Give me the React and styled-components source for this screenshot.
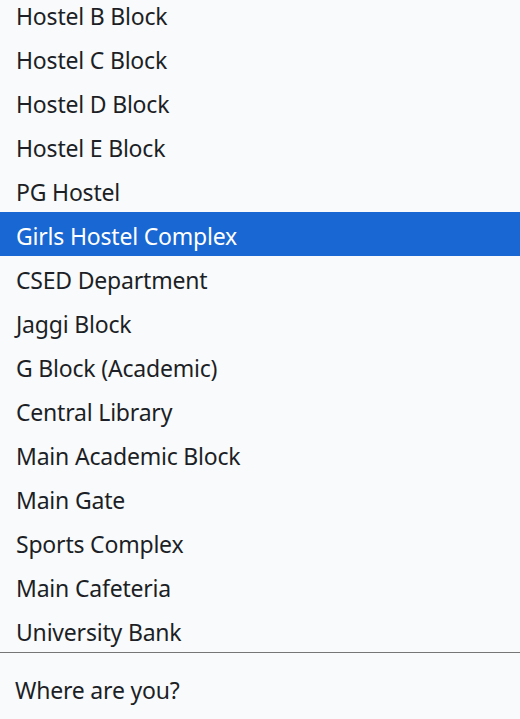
import React from "react";
import styled, { createGlobalStyle } from "styled-components";

const Global = createGlobalStyle`
  html, body { margin: 0; padding: 0; background: #f9fafb; }
  body { font-family: "Noto Sans", "Open Sans", sans-serif; }
`;

const Page = styled.div`
  width: 520px;
  height: 719px;
  display: flex;
  flex-direction: column;
  background: #f9fafb;
  overflow: hidden;
`;

const ListBox = styled.ul`
  list-style: none;
  margin: 0;
  padding: 0;
  height: 652px;
  overflow: hidden;
  flex: none;
`;

const Scroller = styled.div`
  margin-top: -8px;
`;

const Option = styled.li`
  height: 44px;
  box-sizing: border-box;
  display: flex;
  align-items: center;
  padding: 3px 16px 0;
  font-size: 23px;
  letter-spacing: -0.2px;
  color: ${(p) => (p.$selected ? "#ffffff" : "#1c1f26")};
  background: ${(p) => (p.$selected ? "#1967d2" : "transparent")};
  white-space: nowrap;
`;

const InputBar = styled.div`
  flex: 1;
  border-top: 1px solid #767676;
  display: flex;
  align-items: center;
  padding: 0 15px;
`;

const Input = styled.input`
  border: none;
  outline: none;
  background: transparent;
  font-family: "Noto Sans", "Open Sans", sans-serif;
  font-size: 23px;
  letter-spacing: -0.2px;
  color: #1c1f26;
  width: 100%;
  padding: 0;
  margin-top: 8px;
  &::placeholder { color: #1c1f26; opacity: 1; }
`;

const items = [
  "Hostel B Block",
  "Hostel C Block",
  "Hostel D Block",
  "Hostel E Block",
  "PG Hostel",
  "Girls Hostel Complex",
  "CSED Department",
  "Jaggi Block",
  "G Block (Academic)",
  "Central Library",
  "Main Academic Block",
  "Main Gate",
  "Sports Complex",
  "Main Cafeteria",
  "University Bank",
];

export default function App() {
  return (
    <>
      <Global />
      <Page>
        <ListBox role="listbox">
          <Scroller>
            {items.map((it) => (
              <Option key={it} role="option" $selected={it === "Girls Hostel Complex"}>
                {it}
              </Option>
            ))}
          </Scroller>
        </ListBox>
        <InputBar>
          <Input placeholder="Where are you?" />
        </InputBar>
      </Page>
    </>
  );
}
